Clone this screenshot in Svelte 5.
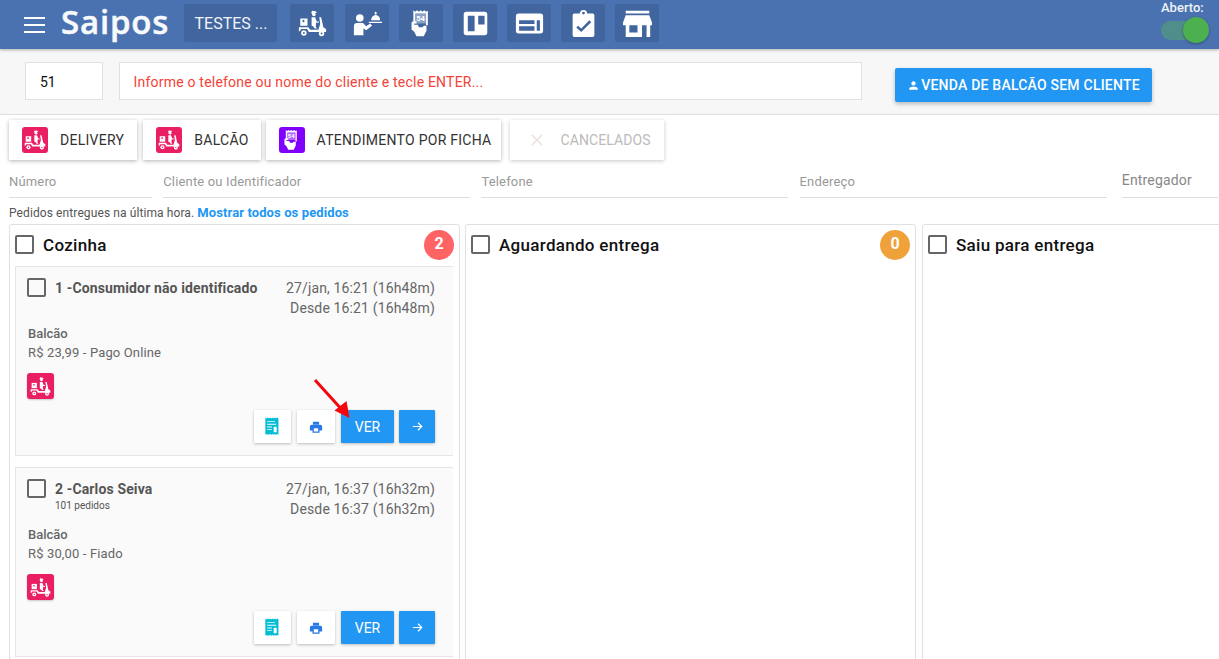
<script>
  const navIcons = ["scooter", "waiter", "ficha", "board", "panel", "check", "store"];
  const tabs = [
    { label: "DELIVERY", icon: "scooter", color: "#ea1e63" },
    { label: "BALCÃO", icon: "scooter", color: "#ea1e63" },
    { label: "ATENDIMENTO POR FICHA", icon: "ficha", color: "#7f00ff" }
  ];
  const filters = ["Número", "Cliente ou Identificador", "Telefone", "Endereço"];
  const orders = [
    { id: 1, name: "Consumidor não identificado", sub: "", date: "27/jan, 16:21 (16h48m)", since: "Desde 16:21 (16h48m)", price: "R$ 23,99 - Pago Online" },
    { id: 2, name: "Carlos Seiva", sub: "101 pedidos", date: "27/jan, 16:37 (16h32m)", since: "Desde 16:37 (16h32m)", price: "R$ 30,00 - Fiado" }
  ];
</script>

{#snippet icon(name)}
  <svg class="ico" viewBox="0 0 32 32" fill="currentColor" aria-hidden="true">
    {#if name === "scooter"}
      <path d="M15.500 2l4 .6 1.500 1.400h-1.600a2.600 2.600 0 0 1-4.800.4z" />
      <circle cx="17.500" cy="6" r="2" />
      <path d="M15 9h4l1.500 4.500 2.500.5v1.300l-3-.3-.4 4.500 1.400 2h-2.500l-2-2.500-1.500-.5z" />
      <path d="M2.500 10.500h8v8h-8z" />
      <path d="M5 12h2v2.500H5z" fill="var(--ib)" />
      <path d="M23.500 9h2l2.500 11 3 2v3.500H12l-2-3.500H3.500l-1.500 2.500H1v-4.500h10.500l2 3h9l2-6.500z" />
      <circle cx="6.500" cy="26.500" r="3" />
      <circle cx="26" cy="27" r="3" />
      <circle cx="6.500" cy="26.500" r="1" fill="var(--ib)" />
      <circle cx="26" cy="27" r="1" fill="var(--ib)" />
    {:else if name === "waiter"}
      <circle cx="7.500" cy="10" r="4.200" />
      <path d="M1 29V19a3.500 3.500 0 0 1 3.500-3.500h6.500l3.500 3.500 4.500-3 2 2.500-6.500 5-3-2V29z" />
      <path d="M20 12.500a5 6 0 0 1 10 0zM24 4a1 1 0 0 1 2 0v2h-2zM17.500 14h15v1.500h-15z" />
    {:else if name === "ficha"}
      <path d="M7 1.500l2 1.500 2-1.500 2 1.500 2-1.500 2 1.500 2-1.500 2 1.500 2-1V18h-2V5H9v9H7z" />
      <path d="M9 5h12v11H9z" opacity=".4" />
      <text x="15" y="13.500" text-anchor="middle" font-size="8.500" font-weight="700" font-family="Roboto, sans-serif">54</text>
      <path d="M6.500 13.500h4v2.500H8v1.500h4l1 2.500h4l1.500-1.500h3V24l-3 6h-8l-2.500-5L5 22.500V15z" />
    {:else if name === "board"}
      <path fill-rule="evenodd" d="M6 3h20a3 3 0 0 1 3 3v20a3 3 0 0 1-3 3H6a3 3 0 0 1-3-3V6a3 3 0 0 1 3-3zm1.500 4.500V24.500h7.500V7.500zm11.500 0V17h7V7.500z" />
    {:else if name === "panel"}
      <path fill-rule="evenodd" d="M4 5h24a3 3 0 0 1 3 3v16a3 3 0 0 1-3 3H4a3 3 0 0 1-3-3V8a3 3 0 0 1 3-3zm.5 7.500v4h17v-4zm0 6.500v5h17v-5zm19.500-6.500V24h3.500V12.500z" />
    {:else if name === "check"}
      <path fill-rule="evenodd" d="M6 5h6a4 4 0 0 1 8 0h6a2 2 0 0 1 2 2v22a2 2 0 0 1-2 2H6a2 2 0 0 1-2-2V7a2 2 0 0 1 2-2zm10-2a1.500 1.500 0 1 0 0 3 1.500 1.500 0 0 0 0-3zM10 18.500l-2 2 5.500 5 11-11-2-2-9 9z" />
    {:else if name === "store"}
      <path fill-rule="evenodd" d="M3 2h26v3H3zM3 7h26l3 8v3h-2v13h-4V18h-5v13H3V18H0v-3zm4 11v8h9v-8z" />
    {:else if name === "receipt"}
      <path fill-rule="evenodd" d="M4 1l2 1.500L8 1l2 1.500L12 1l2 1.500L16 1l2 1.500L20 1l2 1.500L24 1l2 1.500V30l-2-1.500-2 1.500-2-1.500-2 1.500-2-1.500-2 1.500-2-1.500L8 30l-2-1.500L4 30zM7 7v1.500h13V7zm0 4.500V13h15v-1.500zM7 16v1.500h8V16zm0 4.500V22h8v-1.500zm11-4v9h5v-9z" />
    {:else if name === "print"}
      <path fill-rule="evenodd" d="M9 4h14v6H9zM6 11h20a4 4 0 0 1 4 4v9h-6v5H8v-5H2v-9a4 4 0 0 1 4-4zm5 8v7h10v-7z" />
    {/if}
  </svg>
{/snippet}

<div class="page">
  <header class="topbar">
    <button class="burger" aria-label="menu"><span></span><span></span><span></span></button>
    <div class="logo">Saipos</div>
    <div class="store">TESTES ...</div>
    <nav class="nav">
      {#each navIcons as n}
        <div class="navbtn" style="--ib:#41659f">{@render icon(n)}</div>
      {/each}
    </nav>
    <div class="status">
      <span>Aberto:</span>
      <div class="switch"><i></i></div>
    </div>
  </header>

  <section class="search">
    <div class="field ddd">51</div>
    <div class="field phone">Informe o telefone ou nome do cliente e tecle ENTER...</div>
    <button class="counter">
      <svg viewBox="0 0 24 24" fill="currentColor" aria-hidden="true"><path d="M12 12a4 4 0 1 0 0-8 4 4 0 0 0 0 8zm0 2c-2.700 0-8 1.300-8 4v2h16v-2c0-2.700-5.300-4-8-4z" /></svg>
      VENDA DE BALCÃO SEM CLIENTE
    </button>
  </section>

  <section class="tabs">
    {#each tabs as t}
      <div class="tab">
        <span class="badge" style="background:{t.color};--ib:{t.color}">{@render icon(t.icon)}</span>
        {t.label}
      </div>
    {/each}
    <div class="tab off">
      <svg class="x" viewBox="0 0 16 16" aria-hidden="true"><path d="M2 2l12 12M14 2L2 14" /></svg>
      CANCELADOS
    </div>
  </section>

  <section class="filters">
    {#each filters as f}
      <div class="filter">{f}</div>
    {/each}
    <div class="filter courier">Entregador</div>
  </section>

  <p class="note">Pedidos entregues na última hora. <b>Mostrar todos os pedidos</b></p>

  <section class="board">
    <div class="col">
      <div class="colhead">
        <span class="box"></span><h3>Cozinha</h3>
        <span class="count red">2</span>
      </div>
      {#each orders as o}
        <article class="card">
          <div class="cardtop">
            <span class="box"></span>
            <div class="who">
              <strong>{o.id} -{o.name}</strong>
              {#if o.sub}<small>{o.sub}</small>{/if}
            </div>
            <div class="when">{o.date}<br />{o.since}</div>
          </div>
          <div class="type">Balcão</div>
          <div class="price">{o.price}</div>
          <span class="mini" style="--ib:#ea1e63">{@render icon("scooter")}</span>
          <div class="actions">
            <button class="act rec">{@render icon("receipt")}</button>
            <button class="act prn">{@render icon("print")}</button>
            <button class="blue ver">VER</button>
            <button class="blue go" aria-label="avançar">
              <svg viewBox="0 0 16 16" fill="none" stroke="currentColor" stroke-width="1.300" aria-hidden="true"><path d="M3 8h9.500M8.500 4l4 4-4 4" /></svg>
            </button>
          </div>
        </article>
      {/each}
    </div>
    <div class="col">
      <div class="colhead">
        <span class="box"></span><h3>Aguardando entrega</h3>
        <span class="count amber">0</span>
      </div>
    </div>
    <div class="col last">
      <div class="colhead">
        <span class="box"></span><h3>Saiu para entrega</h3>
      </div>
    </div>
  </section>

  <svg class="arrow" viewBox="0 0 50 50" aria-hidden="true">
    <path d="M2 2L31 34" stroke="#f2060c" stroke-width="3" fill="none" />
    <path d="M36.500 40L21.500 32.500L33.500 23z" fill="#f2060c" />
  </svg>
</div>

<style>
  :global(body) { margin: 0; background: #fff; }
  .page {
    position: relative;
    height: 659px;
    overflow: hidden;
    font-family: Roboto, "Liberation Sans", sans-serif;
    color: #555;
  }
  button { font-family: inherit; border: 0; padding: 0; cursor: pointer; }

  .topbar {
    display: flex;
    align-items: flex-start;
    height: 49px;
    box-sizing: border-box;
    background: #4a72b0;
    box-shadow: 0 1px 3px rgba(0,0,0,.3);
    position: relative;
    color: #fff;
  }
  .burger {
    display: flex; flex-direction: column; gap: 5px;
    width: 21px; margin: 17px 0 0 24px; background: none;
  }
  .burger span { display: block; height: 2px; background: #fff; }
  .logo {
    width: 123px; margin-left: 16px; height: 44px;
    font-size: 33px; line-height: 43px; font-weight: 600; letter-spacing: .8px;
    font-family: "Open Sans", sans-serif;
    -webkit-text-stroke: .5px #fff;
    opacity: .96;
  }
  .store {
    width: 93px; height: 38px; margin-top: 4px;
    background: #41659f; border-radius: 2px;
    font-size: 16px; line-height: 40px; text-align: center; text-indent: 1px;
    color: #f1f4f9;
  }
  .nav { display: flex; gap: 10px; margin: 4px 0 0 13px; }
  .navbtn {
    width: 44px; height: 38px; display: flex; align-items: center; justify-content: center;
    background: #41659f; border-radius: 2px;
  }
  .navbtn:first-child { margin-right: 1px; }
  .navbtn .ico { width: 29px; height: 29px; }
  .ico { display: block; }
  .status { margin-left: auto; width: 58px; font-size: 13px; font-weight: 500; line-height: 15px; color: #eef2f8; }
  .status span { display: block; text-align: left; }
  .switch { position: relative; width: 40px; height: 19px; margin: 6px 0 0 0; background: #4f8e8a; border-radius: 10px; }
  .switch i {
    position: absolute; left: 22px; top: -4px; width: 26px; height: 26px; border-radius: 50%;
    background: #4caf50; box-shadow: 0 1px 3px rgba(0,0,0,.3);
  }

  .search {
    display: flex; align-items: flex-start;
    height: 66px; box-sizing: border-box;
    background: #f7f7f7; border-bottom: 1px solid #ddd;
    padding: 13px 0 0 25px;
  }
  .field {
    height: 38px; box-sizing: border-box; background: #fff; border: 1px solid #e0e0e0;
    font-size: 14px; line-height: 38px;
  }
  .ddd { width: 78px; padding-left: 14px; color: #111; }
  .phone { width: 743px; margin-left: 16px; padding-left: 13.500px; color: #f44336; letter-spacing: .21px; }
  .counter {
    display: flex; align-items: center; justify-content: center;
    width: 257px; height: 34px; margin: 6px 0 0 33px;
    background: #2196f3; color: #fff; border-radius: 2px;
    font-size: 14px; font-weight: 500; letter-spacing: .22px;
    box-shadow: 0 2px 4px rgba(0,0,0,.25);
  }
  .counter svg { width: 13px; height: 13px; margin-right: 1px; }

  .tabs { display: flex; padding: 5px 0 0 9px; }
  .tab {
    display: flex; align-items: center;
    height: 40px; box-sizing: border-box; margin-right: 5px; padding: 0 13px 0 13px;
    background: #fff; color: #333; font-size: 14px; letter-spacing: .27px;
    box-shadow: 0 1px 4px rgba(0,0,0,.3);
  }
  .tab:nth-child(1) { margin-right: 6px; }
  .tab:nth-child(2) { padding-right: 12px; }
  .tab:nth-child(3) { padding-right: 9px; }
  .badge {
    width: 26px; height: 26px; border-radius: 3px; margin-right: 12px; color: #fff;
    display: flex; align-items: center; justify-content: center;
  }
  .badge .ico { width: 22px; height: 22px; }
  .tab.off { margin-left: 4px; color: #bbb; padding: 0 13px 0 20px; letter-spacing: .1px; box-shadow: 0 1px 4px rgba(0,0,0,.22); }
  .x { width: 14px; height: 14px; margin-right: 17px; stroke: #ece2de; stroke-width: 2; fill: none; }

  .filters { display: grid; grid-template-columns: 143px 307px 307px 307px 100px; column-gap: 11.200px; padding: 10px 0 0 9px; width: 1280px; }
  .filter {
    height: 28px; box-sizing: border-box;
    border-bottom: 1px solid #ddd;
    font-size: 13px; line-height: 24px; color: #999; letter-spacing: .17px;
  }
  .filter.courier { font-size: 14px; margin-left: 4px; line-height: 20px; color: #888; }

  .note { margin: 7px 0 0 9px; font-size: 12px; line-height: 16px; color: #555; letter-spacing: .1px; }
  .note b { color: #2196f3; font-weight: 700; font-size: 13px; }

  .board { display: flex; gap: 5px; margin: 3px 0 0 9px; width: 1400px; }
  .col {
    width: 451px; height: 460px; box-sizing: border-box; flex: none;
    border: 1px solid #e0e0e0; border-radius: 3px; padding: 0 6px 0 5px;
  }
  .col.last { margin-left: 1px; }
  .colhead { display: flex; align-items: center; height: 41px; position: relative; top: -1px; }
  .colhead h3 { margin: 0 0 0 9px; font-size: 17px; line-height: 20px; font-weight: 500; color: #111; letter-spacing: .3px; }
  .box {
    display: block; flex: none; width: 15px; height: 15px;
    border: 2px solid #666; border-radius: 2px;
  }
  .count {
    position: absolute; right: -1px; top: 6px; width: 30px; height: 30px; border-radius: 50%;
    color: #fff; text-align: center; font-size: 16px; font-weight: 700; line-height: 28px;
  }
  .red { background: #ff6464; }
  .amber { background: #f0a23a; }

  .card {
    position: relative; box-sizing: border-box; height: 190px; margin-bottom: 11px;
    background: #fafafa; border: 1px solid #e6e6e6; border-right: 0;
    padding: 11px 18px 0 12px;
  }
  .cardtop { display: flex; height: 45px; margin-left: -1px; }
  .who { margin-left: 9px; flex: 1; }
  .who strong { display: block; font-size: 14px; font-weight: 700; line-height: 20px; color: #555; letter-spacing: .13px; }
  .who small { display: block; font-size: 10px; line-height: 10px; color: #555; margin-top: 2px; }
  .when { text-align: right; font-size: 14px; line-height: 20px; color: #666; letter-spacing: .14px; }
  .type { margin-top: 1px; font-size: 13px; font-weight: 500; line-height: 20px; color: #666; }
  .price { font-size: 13px; line-height: 18px; color: #666; letter-spacing: .14px; }
  .mini {
    display: flex; align-items: center; justify-content: center;
    width: 27px; height: 26px; margin: 11px 0 0 -1px; border-radius: 3px;
    background: #ea1e63; color: #fff;
    box-shadow: 0 1px 2px rgba(0,0,0,.2);
  }
  .mini .ico { width: 21px; height: 21px; }
  .actions { display: flex; justify-content: flex-end; gap: 6px; margin-top: 11px; }
  .act, .blue { height: 33px; display: flex; align-items: center; justify-content: center; border-radius: 1px; box-shadow: 0 1px 3px rgba(0,0,0,.25); }
  .act { background: #fff; }
  .rec { width: 37px; color: #00bcd4; }
  .rec .ico { width: 19px; height: 19px; }
  .prn { width: 38px; color: #2979e6; }
  .prn .ico { width: 14px; height: 14px; }
  .blue { background: #2196f3; color: #fff; }
  .ver { width: 53px; font-size: 14px; margin-right: -1px; }
  .go { width: 36px; }
  .go svg { width: 15px; height: 15px; }

  .arrow { position: absolute; left: 313px; top: 378px; width: 50px; height: 50px; }
</style>
